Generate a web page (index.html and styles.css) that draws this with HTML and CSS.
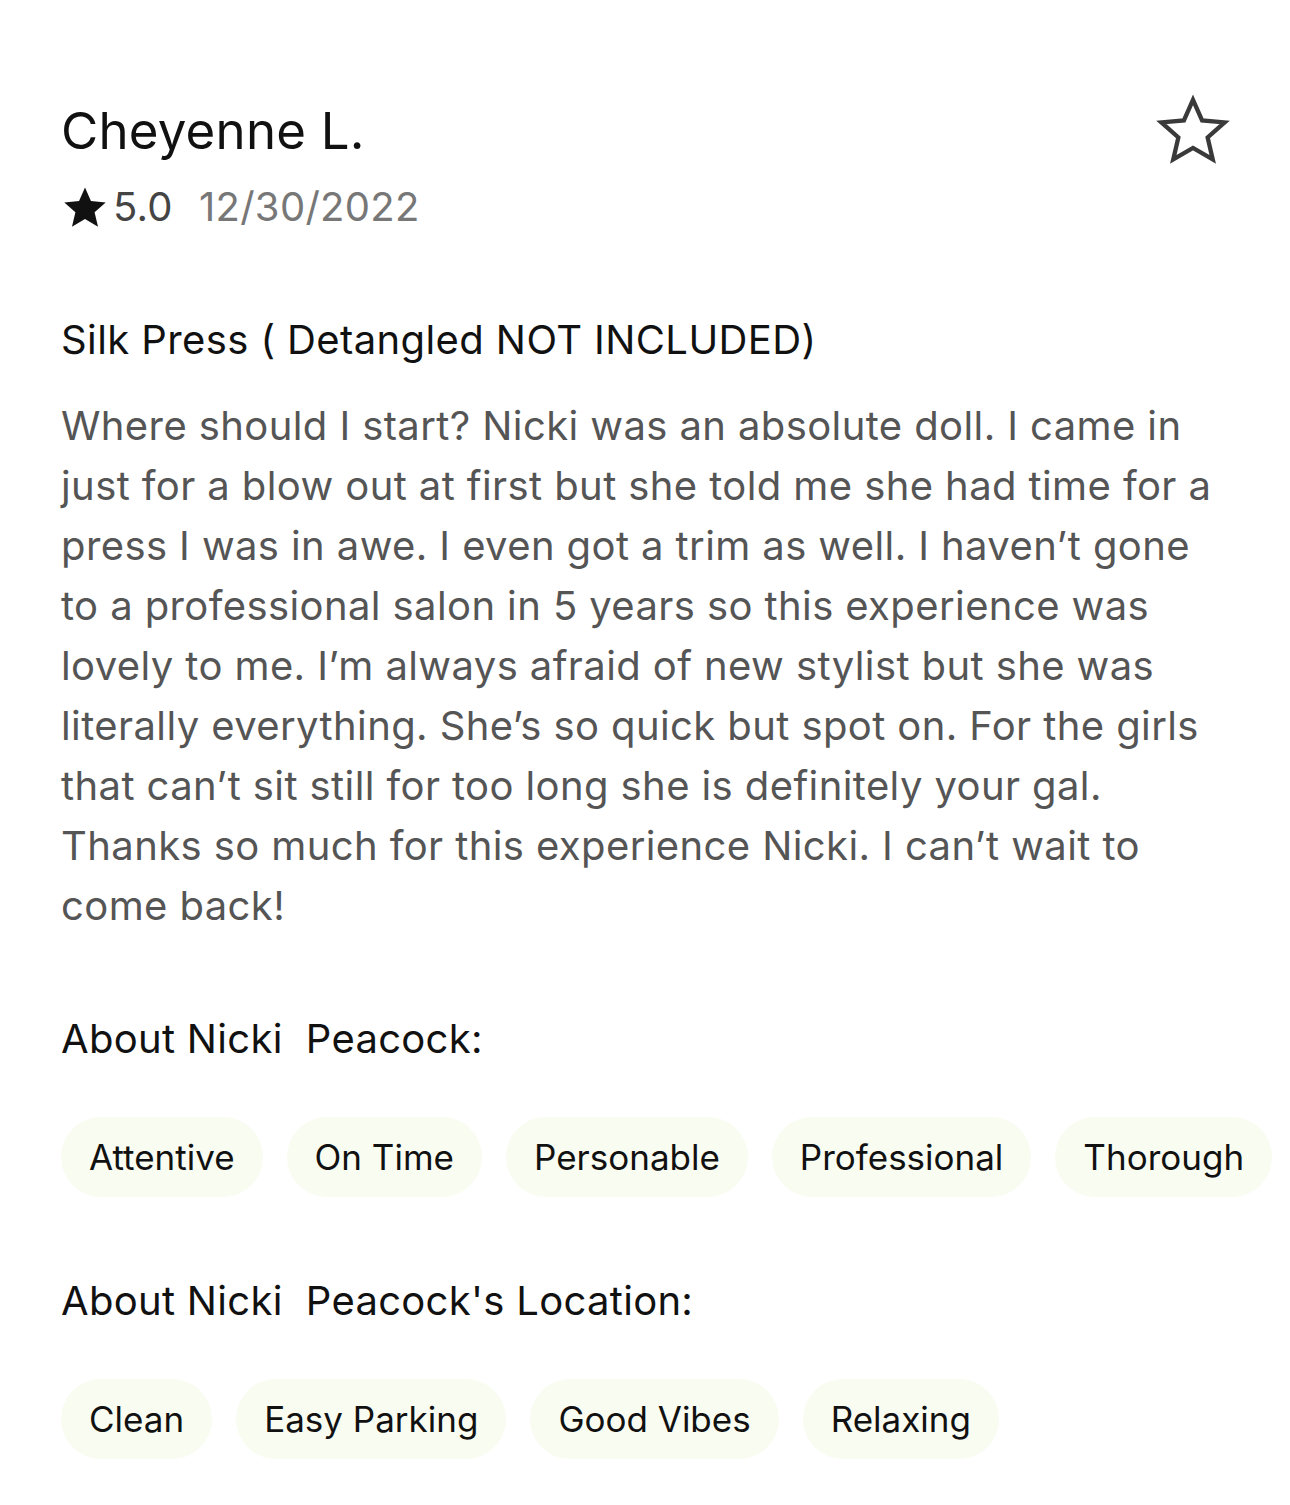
FILE: index.html
```html
<!DOCTYPE html>
<html lang="en">
<head>
  <meta charset="UTF-8" />
  <meta name="viewport" content="width=device-width, initial-scale=1.0"/>
  <title>Review</title>
  <link rel="stylesheet" href="styles.css">
</head>
<body>
  <div class="review">
    <div class="review-head">
      <div>
        <h1 class="reviewer">Cheyenne L.</h1>
        <div class="meta">
          <svg class="star-solid" viewBox="0 0 24 24" width="48" height="46">
            <path d="M12 1.8l3.1 7.1 7.7.7-5.8 5.1 1.8 7.6L12 18.3l-6.8 4 1.8-7.6-5.8-5.1 7.7-.7z" fill="#111"/>
          </svg>
          <span class="score">5.0</span>
          <span class="date">12/30/2022</span>
        </div>
      </div>
      <svg class="star-outline" viewBox="0 0 24 24" width="78" height="74">
        <path d="M12 2.2l2.95 6.7 7.3.65-5.5 4.85 1.65 7.15L12 17.8l-6.4 3.75 1.65-7.15-5.5-4.85 7.3-.65z" fill="none" stroke="#3a3a3a" stroke-width="1.4" stroke-linejoin="miter"/>
      </svg>
    </div>

    <h2 class="service">Silk Press ( Detangled NOT INCLUDED)</h2>
    <p class="body-text">Where should I start? Nicki was an absolute doll. I came in just for a blow out at first but she told me she had time for a press I was in awe. I even got a trim as well. I haven’t gone to a professional salon in 5 years so this experience was lovely to me. I’m always afraid of new stylist but she was literally everything. She’s so quick but spot on. For the girls that can’t sit still for too long she is definitely your gal. Thanks so much for this experience Nicki. I can’t wait to come back!</p>

    <h3 class="about">About Nicki&nbsp; Peacock:</h3>
    <div class="chips">
      <span class="chip">Attentive</span>
      <span class="chip">On Time</span>
      <span class="chip">Personable</span>
      <span class="chip">Professional</span>
      <span class="chip">Thorough</span>
    </div>

    <h3 class="about">About Nicki&nbsp; Peacock's Location:</h3>
    <div class="chips">
      <span class="chip">Clean</span>
      <span class="chip">Easy Parking</span>
      <span class="chip">Good Vibes</span>
      <span class="chip">Relaxing</span>
    </div>
  </div>
</body>
</html>
```

FILE: styles.css
```css
body {
  margin: 0;
  background: #fff;
  font-family: Inter, "Noto Sans", sans-serif;
  color: #111;
}

.review {
  padding: 96px 0 40px 61px;
}

.review-head {
  display: flex;
  justify-content: space-between;
  align-items: flex-start;
  padding-right: 58px;
}

.reviewer {
  margin: 0;
  font-size: 51px;
  font-weight: 400;
  line-height: 70px;
  letter-spacing: 0.2px;
}

.meta {
  display: flex;
  align-items: center;
  gap: 6px;
  margin-top: 16px;
  font-size: 40px;
  line-height: 50px;
  letter-spacing: 0.3px;
}

.star-solid {
  margin-right: -2px;
}

.score {
  color: #444;
  margin-right: 20px;
}

.date {
  color: #777;
}

.star-outline {
  margin-top: -3px;
}

.service {
  margin: 80px 0 0;
  font-size: 40px;
  font-weight: 400;
  line-height: 56px;
  letter-spacing: 0.4px;
}

.body-text {
  margin: 28px 0 0;
  width: 1165px;
  font-size: 40px;
  line-height: 60px;
  letter-spacing: 0.4px;
  color: #555;
}

.about {
  margin: 75px 0 0;
  font-size: 40px;
  font-weight: 400;
  line-height: 56px;
  letter-spacing: 0.3px;
}

.chips {
  display: flex;
  flex-wrap: nowrap;
  gap: 24px;
  margin-top: 50px;
}

.chips + .about {
  margin-top: 76px;
}

.chip {
  display: inline-flex;
  align-items: center;
  height: 80px;
  padding: 0 28px;
  border-radius: 40px;
  background: #f9fcf1;
  font-size: 35px;
  white-space: nowrap;
}
```
